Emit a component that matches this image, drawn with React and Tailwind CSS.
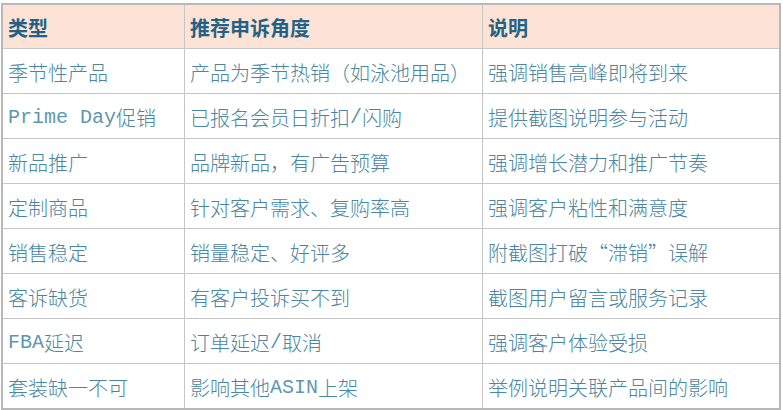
import React from "react";

const L = ({ children }) => (
  <span className="font-['Liberation_Mono',monospace] font-normal text-[#5f97b1]">{children}</span>
);

const rows = [
  ["季节性产品", "产品为季节热销（如泳池用品）", "强调销售高峰即将到来"],
  [<><L>Prime Day</L>促销</>, <>已报名会员日折扣<L>/</L>闪购</>, "提供截图说明参与活动"],
  ["新品推广", "品牌新品，有广告预算", "强调增长潜力和推广节奏"],
  ["定制商品", "针对客户需求、复购率高", "强调客户粘性和满意度"],
  ["销售稳定", "销量稳定、好评多", "附截图打破“滞销”误解"],
  ["客诉缺货", "有客户投诉买不到", "截图用户留言或服务记录"],
  [<><L>FBA</L>延迟</>, <>订单延迟<L>/</L>取消</>, "强调客户体验受损"],
  ["套装缺一不可", <>影响其他<L>ASIN</L>上架</>, "举例说明关联产品间的影响"],
];

const cell = "flex items-center pt-[3px] pl-[5px] text-[20px] font-light text-[#4886a2] leading-none whitespace-nowrap font-['Noto_Sans_CJK_SC',sans-serif]";

export default function App() {
  return (
    <div className="w-[783px] h-[410px] bg-white overflow-hidden font-['Noto_Sans_CJK_SC',sans-serif]">
      <div className="ml-[1px] mt-[3px] w-[780px] border-2 border-[#b8b8b8]">
        <div className="grid grid-cols-[182px_298px_1fr] h-[44px] bg-[#fce3d5] border-b border-[#c6c6c6]">
          <div className="flex items-center pt-[3px] pl-[5px] text-[20px] font-bold text-[#236285] leading-none border-r border-[#c6c6c6]">类型</div>
          <div className="flex items-center pt-[3px] pl-[5px] text-[20px] font-bold text-[#236285] leading-none border-r border-[#c6c6c6]">推荐申诉角度</div>
          <div className="flex items-center pt-[3px] pl-[5px] text-[20px] font-bold text-[#236285] leading-none">说明</div>
        </div>
        {rows.map((r, i) => (
          <div
            key={i}
            className={
              i < rows.length - 1
                ? "grid grid-cols-[182px_298px_1fr] h-[45px] border-b border-[#c6c6c6]"
                : "grid grid-cols-[182px_298px_1fr] h-[44px]"
            }
          >
            <div className={cell + " border-r border-[#c6c6c6]"}>{r[0]}</div>
            <div className={cell + " border-r border-[#c6c6c6]"}>{r[1]}</div>
            <div className={cell}>{r[2]}</div>
          </div>
        ))}
      </div>
    </div>
  );
}
